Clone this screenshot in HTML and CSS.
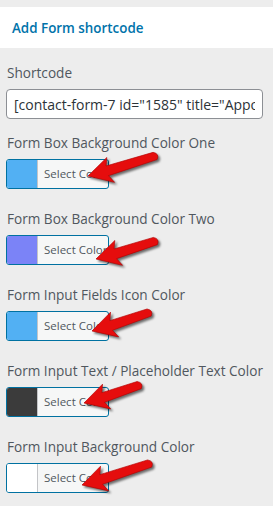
FILE: index.html
```html
<!DOCTYPE html>
<html lang="en">
<head>
  <meta charset="UTF-8" />
  <title>Add Form shortcode</title>
  <link rel="stylesheet" href="styles.css">
</head>
<body>
  <div class="page">
    <div class="panel-head">
      <h2>Add Form shortcode</h2>
    </div>

    <div class="panel-body">
      <div class="field field-code">
        <label>Shortcode</label>
        <input type="text" class="code-input" value='[contact-form-7 id="1585" title="Appointment Form"]' readonly>
      </div>

      <div class="field">
        <label>Form Box Background Color One</label>
        <button class="color-btn"><span class="swatch sw-blue"></span><span class="btn-text">Select Color</span></button>
      </div>

      <div class="field">
        <label>Form Box Background Color Two</label>
        <button class="color-btn"><span class="swatch sw-violet"></span><span class="btn-text">Select Color</span></button>
      </div>

      <div class="field">
        <label>Form Input Fields Icon Color</label>
        <button class="color-btn"><span class="swatch sw-blue"></span><span class="btn-text">Select Color</span></button>
      </div>

      <div class="field">
        <label>Form Input Text / Placeholder Text Color</label>
        <button class="color-btn"><span class="swatch sw-dark"></span><span class="btn-text">Select Color</span></button>
      </div>

      <div class="field">
        <label>Form Input Background Color</label>
        <button class="color-btn"><span class="swatch sw-white"></span><span class="btn-text">Select Color</span></button>
      </div>
    </div>

    <!-- red arrows drawn on top of the screenshot -->
    <svg class="arrows" width="273" height="506" viewBox="0 0 273 506">
      <g fill="#e50d0d" stroke="#b30000" stroke-width="0.6" stroke-linejoin="round">
        <path transform="translate(88 176) rotate(-15)" d="M0 0 L23 -13 L20 -5 L69 -6 Q75 -3 71 2 L20 5 L24 13 Z"/>
        <path transform="translate(96 259) rotate(-15)" d="M0 0 L23 -13 L20 -5 L61 -6 Q67 -3 63 2 L20 5 L24 13 Z"/>
        <path transform="translate(92 331) rotate(-16)" d="M0 0 L23 -13 L20 -5 L59 -6 Q65 -3 61 2 L20 5 L24 13 Z"/>
        <path transform="translate(84 403) rotate(-16)" d="M0 0 L23 -13 L20 -5 L57 -6 Q63 -3 59 2 L20 5 L24 13 Z"/>
        <path transform="translate(82 485) rotate(-16)" d="M0 0 L23 -13 L20 -5 L70 -6 Q76 -3 72 2 L20 5 L24 13 Z"/>
      </g>
    </svg>
  </div>
</body>
</html>
```

FILE: styles.css
```css
body {
  margin: 0;
  background: #ededed;
  font-family: 'Open Sans', sans-serif;
  color: #50575e;
}

.page {
  position: relative;
  width: 273px;
  height: 506px;
  overflow: hidden;
  padding-top: 7px;
  box-sizing: border-box;
}

.panel-head {
  background: #fff;
  height: 41px;
  display: flex;
  align-items: center;
  padding-left: 12px;
}

.panel-head h2 {
  margin: 0;
  font-size: 13.4px;
  font-weight: 600;
  color: #0073aa;
}

.panel-body {
  padding: 15px 10px 0 6px;
}

.field {
  display: flex;
  flex-direction: column;
  align-items: flex-start;
  margin-bottom: 20px;
}

.field label {
  display: block;
  font-size: 13.6px;
  line-height: 20px;
  margin: 0 0 6px 1px;
  color: #50575e;
}

.field-code {
  margin-bottom: 14px;
}

.code-input {
  width: 257px;
  height: 30px;
  box-sizing: border-box;
  border: 1px solid #8c8f94;
  border-radius: 4px;
  padding: 0 7px;
  font-family: 'Open Sans', sans-serif;
  font-size: 14px;
  color: #2c3338;
  background: #fff;
}

.color-btn {
  display: flex;
  width: 103px;
  height: 30px;
  padding: 0;
  box-sizing: border-box;
  border: 1px solid #0071a1;
  border-radius: 3px;
  background: #f6f7f7;
  overflow: hidden;
}

.swatch {
  width: 30px;
  height: 100%;
  border-right: 1px solid #c3c4c7;
}

.sw-blue { background: #52b0f3; }
.sw-violet { background: #7b83f7; }
.sw-dark { background: #3b3b3b; }
.sw-white { background: #fff; }

.btn-text {
  padding-left: 6px;
  font-family: 'Open Sans', sans-serif;
  font-size: 11.5px;
  line-height: 28px;
  color: #50575e;
  white-space: nowrap;
}

.arrows {
  position: absolute;
  left: 0;
  top: 0;
  filter: drop-shadow(2px 2px 1px rgba(0, 0, 0, 0.55));
}
```
